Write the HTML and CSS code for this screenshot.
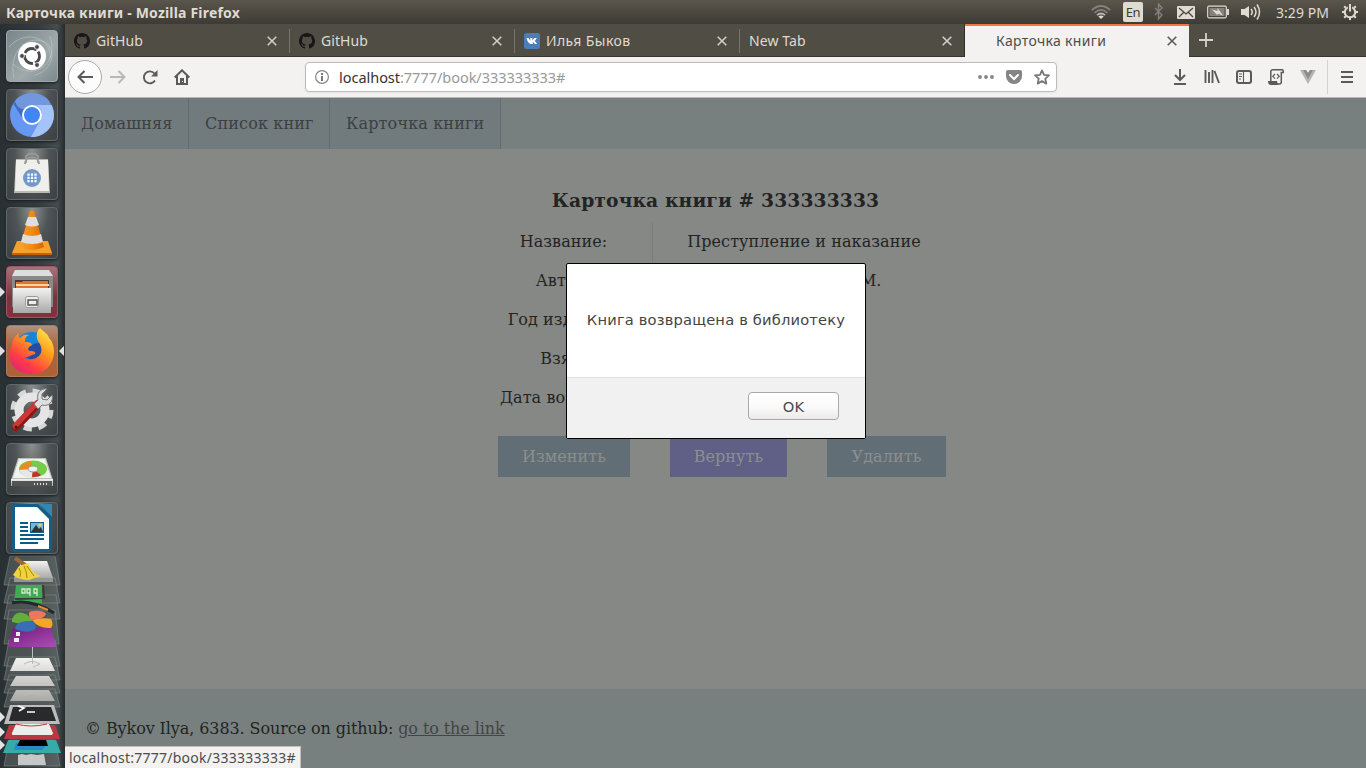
FILE: index.html
```html
<!DOCTYPE html>
<html lang="ru">
<head>
<meta charset="utf-8">
<title>Карточка книги</title>
<link rel="stylesheet" href="styles.css">
</head>
<body>
<svg class="defs" aria-hidden="true">
  <defs>
    <linearGradient id="steel" x2="0" y2="1"><stop offset="0" stop-color="#f2f2f0"/><stop offset="1" stop-color="#a9aaa8"/></linearGradient>
    <linearGradient id="cone" x2="1" y2="0"><stop offset="0" stop-color="#f7a030"/><stop offset=".5" stop-color="#f58a10"/><stop offset="1" stop-color="#d86404"/></linearGradient>
    <linearGradient id="fox" x1=".9" y1="0" x2=".2" y2="1"><stop offset="0" stop-color="#fff14f"/><stop offset=".4" stop-color="#ff9a1e"/><stop offset=".75" stop-color="#ff3b46"/><stop offset="1" stop-color="#e0217f"/></linearGradient>
    <linearGradient id="purple" x2="1" y2="1"><stop offset="0" stop-color="#6c1d78"/><stop offset="1" stop-color="#b04cb8"/></linearGradient>
    <symbol id="github" viewBox="0 0 16 16"><path fill="#191717" d="M8 0C3.58 0 0 3.58 0 8c0 3.54 2.29 6.53 5.47 7.59.4.07.55-.17.55-.38v-1.49c-2.01.37-2.53-.49-2.69-.94-.09-.23-.48-.94-.82-1.13-.28-.15-.68-.52-.01-.53.63-.01 1.08.58 1.23.82.72 1.21 1.87.87 2.33.66.07-.52.28-.87.51-1.07-1.78-.2-3.64-.89-3.64-3.95 0-.87.31-1.59.82-2.15-.08-.2-.36-1.02.08-2.12 0 0 .67-.21 2.2.82a7.6 7.6 0 0 1 4 0c1.53-1.04 2.2-.82 2.2-.82.44 1.1.16 1.92.08 2.12.51.56.82 1.27.82 2.15 0 3.07-1.87 3.75-3.65 3.95.29.25.54.73.54 1.48v2.2c0 .21.15.46.55.38A8 8 0 0 0 16 8c0-4.42-3.58-8-8-8z"/></symbol>
    <symbol id="close" viewBox="0 0 10 10"><path d="M.7.7l8.6 8.6M9.3.7L.7 9.3" fill="none" stroke="currentColor" stroke-width="1.6"/></symbol>
  </defs>
</svg>
<header class="panel">
  <span class="panel-title">Карточка книги - Mozilla Firefox</span>
  <div class="indicators">
    <svg width="20" height="16" viewBox="0 0 20 16"><g fill="none" stroke-width="1.7"><path stroke="#85827b" d="M.8 6.2Q10-2.2 19.2 6.2M3.5 9Q10 2.8 16.500 9"/><path stroke="#bdb9b1" d="M6 11.200q4-3.400 8 0"/></g><path fill="#dfdbd2" d="M7.300 12.400q2.700-2 5.400 0L10 15z"/></svg>
    <span class="lang">En</span>
    <svg class="bt" width="10" height="18" viewBox="0 0 10 18"><path d="M1 5l7 7-3.500 4V1L8 5l-7 7" fill="none" stroke="#85827b" stroke-width="1.400"/></svg>
    <svg class="mail" width="18" height="13" viewBox="0 0 18 13"><rect width="18" height="13" rx="1" fill="#dfdbd2"/><path d="M2 2l7 6 7-6M2 11l4.500-4.500M16 11l-4.500-4.500" fill="none" stroke="#49473f" stroke-width="1.300"/></svg>
    <svg class="batt" width="22" height="14" viewBox="0 0 22 14"><rect x=".7" y="1.200" width="18.600" height="11.600" rx="1.200" fill="none" stroke="#dfdbd2" stroke-width="1.200"/><path fill="#85827b" d="M2.500 3h15v8h-15z"/><path fill="#dfdbd2" d="M20 4h2v6h-2zM5 4.500l5.500 1.500V3l5.500 7.500-5.500-2v2z"/></svg>
    <svg class="vol" width="20" height="18" viewBox="0 0 20 18"><path fill="#dfdbd2" d="M0 6h3.500L8 3v12l-4.500-3H0z"/><path d="M10 6q2.500 3 0 6M13 4q4 5 0 10M16 1.500q5 7.500 0 15" fill="none" stroke="#dfdbd2" stroke-width="1.500"/></svg>
    <span class="clock">3:29 PM</span>
    <svg class="power" width="16" height="16" viewBox="0 0 16 16"><g fill="none" stroke="#dfdbd2" stroke-width="2"><path d="M5.800 3.400a5.200 5.200 0 1 0 4.400 0M8 0v7.500"/><path d="M3.800 3.800L2.200 2.200M12.200 3.800l1.600-1.600M2.500 8H0M13.500 8H16M4 12l-1.800 1.800M12 12l1.800 1.800M8 13.500V16"/></g></svg>
  </div>
</header>
<div class="desktop">
  <aside class="launcher">
    <div class="tile dash"><svg viewBox="0 0 52 52"><g fill="none" stroke="#c3caca" stroke-opacity=".55"><path d="M8 48C2 23 20 4 39 12c14 10 5 30-10 33M44 6c10 30-18 45-37 28M3 17C21-3 47 10 44 29"/></g><circle cx="26" cy="26" r="14" fill="#fff"/><circle cx="26" cy="26" r="7.500" fill="none" stroke="#47494a" stroke-width="2.800" stroke-dasharray="13.700 2" stroke-dashoffset="5"/><g fill="#47494a" stroke="#fff" stroke-width=".8"><circle cx="16" cy="26" r="2.400"/><circle cx="31" cy="17" r="2.400"/><circle cx="31" cy="35" r="2.400"/></g></svg></div>
    <div class="tile"><svg viewBox="0 0 52 52"><circle cx="26" cy="26" r="22" fill="#6698f3"/><path fill="#416bc7" d="M7.500 15A22 22 0 0 1 45.500 16H26A10 10 0 0 0 17 30z"/><path fill="#7198de" d="M9 12a22 22 0 0 1 34 0l2 4H26q-5 0-8 4-6 1-9-8z"/><path fill="#a3c3fa" d="M45.500 16A22 22 0 0 1 25 48l10-18a10 10 0 0 0-6-14z"/><circle cx="26" cy="26" r="9" fill="#4285f4" stroke="#fff" stroke-width="2"/></svg></div>
    <div class="tile"><svg viewBox="0 0 52 52"><path fill="#bbb9b2" d="M10 11h32l2 34H8z"/><path fill="#efefeb" d="M10 12h32l1 31H9z"/><path d="M20 15V8q6-5 12 0v7M19 16c0-9 14-9 14 0" fill="none" stroke="#999a96" stroke-width="1.800"/><circle cx="26" cy="30" r="9" fill="#7399c9"/><path d="M22.500 25.500v9m3.500-9v9m3.500-9v9" stroke="#fff" stroke-width="2.200" stroke-dasharray="2.200 1.100"/></svg></div>
    <div class="tile"><svg viewBox="0 0 52 52"><path fill="#f5a12c" d="M11 34h31l4 12H6z"/><path fill="#c65f09" d="M6 46h40v2H6z"/><path fill="url(#cone)" d="M24 4q2-1 4 0l10 36q-12 6-24 0z"/><path fill="#dedede" d="M22 10h8l3 8q-7 3-14 0zM17 27q9 4 18 0l2 8q-11 4-22 0z"/></svg></div>
    <div class="tile files"><svg viewBox="0 0 52 52"><path fill="#898989" d="M6 10l3-6h34l4 6v31H6z"/><path fill="#ddd" d="M6 10l3-6h34l4 6z"/><path fill="#4b3934" d="M9 14h34v10H9z"/><path fill="#dd7430" d="M10 16h6l1-1h25v8H10z"/><path d="M10 19h33" stroke="#ffd29b" stroke-width="2"/><path fill="url(#steel)" d="M7 22h38v25H7z"/><rect x="19.500" y="30.500" width="13" height="11" rx="2" fill="#eee" stroke="#999"/><path fill="none" stroke="#555" stroke-width="1.500" d="M22 34h9v5h-9z"/></svg><i class="pip"></i></div>
    <div class="tile firefox"><svg viewBox="0 0 52 52"><circle cx="26" cy="25" r="18" fill="#1784d8"/><path fill="#284a9f" d="M23 22q14-10 14 5L27 36l-9-5z"/><path fill="url(#fox)" d="M34 3c-4 4-4 9-2 13 6 8 4 16-5 18-5 1-7 0-9-2 5 1 6-2 11-3 1-2-1-3-4-3-4 0-4-4 1-6 0-3-5-3-7-3 0-4 1-6 4-7-4-1-6 0-9 3-2-1-2-3-1-5-5 4-7 8-7 12-7 14 1 28 18 29 14 1 24-9 24-23 0-5-2-10-5-13-1-5-6-6-9-10z"/></svg><i class="pip"></i><i class="pip active"></i></div>
    <div class="tile"><svg viewBox="0 0 52 52"><circle cx="26" cy="26" r="18.500" fill="none" stroke="#d8d8d8" stroke-width="6" stroke-dasharray="8 6.530"/><circle cx="26" cy="26" r="13" fill="none" stroke="#e5e5e5" stroke-width="9"/><path d="M10 43L32 20" stroke="#8f1717" stroke-width="8" stroke-linecap="round"/><path d="M9 42L31 19" stroke="#cc3935" stroke-width="5" stroke-linecap="round"/><path fill="#dedede" stroke="#777" d="M28 20l4-4c-2-7 3-12 9-11l-5 5v5l5 1 5-5c2 7-4 12-10 10l-4 4z"/><circle cx="10" cy="43" r="1.500" fill="#551111"/></svg></div>
    <div class="tile"><svg viewBox="0 0 52 52"><path fill="#bdbdb9" d="M12 15h28l7 22H5z"/><path fill="#f1f1ee" d="M13 16h26l6 19H7z"/><ellipse cx="27" cy="26" rx="14" ry="8.500" fill="#73ce45"/><path fill="#e88b24" d="M27 26L13 27q2-8 12-9z"/><path fill="#e7e7e7" d="M27 26l-14 1q3 8 13 7z"/><path fill="#ca2d2d" d="M27 26l-1 8q6 0 9-2z"/><ellipse cx="27" cy="26" rx="5" ry="3" fill="#eee" stroke="#999"/><path fill="url(#steel)" d="M5 36h42v7H5z"/><path fill="#525554" d="M6 38h40v5H6z"/><path d="M28 41h15" stroke="#ddd" stroke-width="2" stroke-dasharray="1 2"/></svg></div>
    <div class="tile"><svg viewBox="0 0 52 52"><path fill="#125e88" d="M9 2h23l14 13v32q0 3-3 3H9q-3 0-3-3V5q0-3 3-3z"/><path fill="#fff" d="M9 5h22l12 12v30H9z"/><path fill="#3186b6" d="M34 2h12v13z"/><path d="M14 21h8m-8 4h8m-8 4h8m-8 4h24m-24 4h24m-24 4h18" stroke="#075c8e" stroke-width="2"/><path fill="#135c88" d="M24 20h14v11H24z"/><path fill="#72b8de" d="M25 21h12v9H25z"/><path fill="#333" d="M25 30l5-7 3 4 2-2 2 5z"/><circle cx="34" cy="23" r="1.500" fill="#f4cb4c"/></svg></div>
    <svg class="folded" viewBox="0 0 65 218" width="65" height="218">
      <g fill="#727978" fill-opacity=".42" stroke="#8a9391" stroke-opacity=".5"><path d="M10 6h45l5 29H4zM10 28h45l5 25H4zM9 45h47l4 24H4zM9 60h46l4 34H4zM9 90h46l5 26H4zM9 107h46l5 23H4zM9 125h46l5 18H4zM9 139h46l5 18H4zM9 190h46l5 26H4z"/></g>
      <path fill="url(#steel)" d="M22 11h25l6 17H14z"/><path fill="#929795" d="M14 28h39v4H14z"/><path d="M15 8l10 7" stroke="#9c673a" stroke-width="4"/><path fill="#efd33a" d="M19 16l9-3q4 11 13 13l-12 4q-10 0-16-5z"/><path d="M19 18q3 5 1 9m4-11q3 6 3 12m0-12q4 6 7 10" fill="none" stroke="#a08a12"/>
      <path fill="#3fa958" d="M16 35h26v18H14z"/><path fill="#343b38" d="M42 35h2l1 14-30 1v-2h28z"/><path d="M22 43v-4h3v4zm8 3v-7h-3v4h3m7 3v-7h-3v4h3" fill="none" stroke="#d8ead8" stroke-width="1.300"/><path d="M12 53q20-4 42 10" fill="none" stroke="#232829" stroke-width="3"/><path d="M38 56l10 4" stroke="#e28d2b" stroke-width="2"/>
      <path fill="url(#purple)" d="M13 78h38l5 19H8z"/><path d="M16 84h4m-6 6h5" stroke="#f1edf3" stroke-width="4"/><path fill="#65ac3e" d="M12 69q4-8 11-6 7 2 9 8-7 5-20 1z"/><path fill="#ed765c" d="M31 70q-5-9 2-9 10-1 13 3-1 5-15 6z"/><path fill="#f7a526" d="M32 70q10-3 19-1 3 5 0 9-12 1-19-8z"/><path fill="#386eb8" d="M32 71q-16-1-17 8 9 4 17 2 8-4 0-10z"/>
      <path fill="url(#steel)" d="M16 108h33l6 13H10zM16 126h33l6 10H10zM16 140h33l6 11H10z"/><path d="M10 122h45M10 137h45M10 152h45" stroke="#555c5b" stroke-width="2"/><path d="M32.500 97v17M24 114q8-5 16 0l-7 3M24 145q10-4 17 0" fill="none" stroke="#b9bdbb"/>
      <path fill="#bcbcbc" d="M10 155h44l6 19H4z"/><path fill="#292a2b" d="M13 157h38l5 14H9z"/><path d="M18 156l6 2-5 3m8 1h8" fill="none" stroke="#fff" stroke-width="1.700"/>
      <path fill="#b93941" d="M9 175h46l5 14H4z"/><path fill="#ededed" d="M16 174h33l4 9q0 2-3 2H14q-3 0-2-2z"/><path d="M16 174q15 4 31 0" fill="none" stroke="#b93941"/>
      <path fill="#38aaa9" d="M8 190h48l5 13H3z"/><path fill="#238bc5" d="M16 193h32l-6 7H14z"/><path fill="#000" d="M20 190h26l2 6H17z"/><path fill="#c4c8c6" d="M18 205l4-1 4 1 5-1 6 1 7-1 2 11H18z"/><path fill="#e4e4e4" d="M0 162l5 5-5 5zM0 177l5 5-5 5zM0 190l5 5-5 5z"/>
    </svg>
  </aside>
  <main class="browser">
    <div class="tabs">
      <div class="tab"><svg class="fav"><use href="#github"/></svg><span>GitHub</span><svg class="x"><use href="#close"/></svg></div>
      <div class="tab"><svg class="fav"><use href="#github"/></svg><span>GitHub</span><svg class="x"><use href="#close"/></svg></div>
      <div class="tab vk"><svg class="fav" viewBox="0 0 16 16"><rect width="16" height="16" rx="2.500" fill="#4d7db8"/><path fill="#fff" d="M2.500 5h2l1.800 3V5h2v2.500L10.500 5h2.300l-2 2.900 2.400 3.100h-2.400l-2-2.200V11H7.500C5 11 3.500 8.500 2.500 5z"/></svg><span>Илья Быков</span><svg class="x"><use href="#close"/></svg></div>
      <div class="tab newtab"><span>New Tab</span><svg class="x"><use href="#close"/></svg></div>
      <div class="tab current"><span>Карточка книги</span><svg class="x"><use href="#close"/></svg></div>
      <svg class="plus" viewBox="0 0 14 14"><path d="M7 0v14M0 7h14" stroke="#d5d2ca" stroke-width="1.800"/></svg>
    </div>
    <div class="toolbar">
      <span class="back"><svg width="16" height="14" viewBox="0 0 16 14"><path d="M16 7H1.500M7.500 1l-6 6 6 6" fill="none" stroke="#5c5a58" stroke-width="2"/></svg></span>
      <svg class="fwd" width="16" height="14" viewBox="0 0 16 14"><path d="M0 7h14.500M8.500 1l6 6-6 6" fill="none" stroke="#b9b8b7" stroke-width="2"/></svg>
      <svg class="reload" width="16" height="16" viewBox="0 0 16 16"><path d="M12.500 4.500A6 6 0 1 0 13 11.500" fill="none" stroke="#5c5a58" stroke-width="1.900"/><path fill="#5c5a58" d="M15.500 1v6.500H9z"/></svg>
      <svg class="home" width="16" height="16" viewBox="0 0 16 16"><path d="M.7 8.500L8 1.300l7.300 7.200M3 7v8h10V7" fill="none" stroke="#5c5a58" stroke-width="2"/><path fill="#5c5a58" d="M6 9h4v6H6z"/><path fill="#f3f2f1" d="M8 12h1v1H8z"/></svg>
      <div class="url">
        <svg width="14" height="14" viewBox="0 0 14 14"><circle cx="7" cy="7" r="6.400" fill="none" stroke="#858585" stroke-width="1.200"/><path fill="#777" d="M6 3h2v2H6zm0 3h2v5H6z"/></svg>
        <span class="address"><b>localhost</b>:7777/book/333333333#</span>
        <svg width="16" height="16" viewBox="0 0 16 16"><g fill="#858585"><circle cx="2" cy="8" r="1.900"/><circle cx="8" cy="8" r="1.900"/><circle cx="14" cy="8" r="1.900"/></g></svg>
        <svg class="pocket" width="16" height="16" viewBox="0 0 16 16"><path fill="#858585" d="M2 1h12q2 0 2 2v4a8 8 0 0 1-16 0V3q0-2 2-2z"/><path d="M4 6l4 4 4-4" fill="none" stroke="#fff" stroke-width="2" stroke-linecap="round"/></svg>
        <svg class="star" width="16" height="16" viewBox="0 0 16 16"><path d="M8 1.400l2 4.500 5 .5-3.700 3.300 1 4.900L8 12.100l-4.300 2.500 1-4.900L1 6.400l5-.5z" fill="none" stroke="#777" stroke-width="1.800" stroke-linejoin="round"/></svg>
      </div>
      <div class="tools">
        <svg viewBox="0 0 16 16"><path d="M8 0v10M3 6l5 5 5-5M2 15h12" fill="none" stroke="#5c5a58" stroke-width="2"/></svg>
        <svg viewBox="0 0 16 16"><path d="M1.500 1v13M5 3v11M8.500 1v13M10.500 2l4.500 12" fill="none" stroke="#5c5a58" stroke-width="1.900"/></svg>
        <svg viewBox="0 0 16 16"><rect x="1" y="2" width="14" height="12" rx="2" fill="none" stroke="#5c5a58" stroke-width="2"/><path d="M7.500 2v12M3 5h3M3 7.500h3M3 10h2" stroke="#5c5a58" stroke-width="1.100"/></svg>
        <svg viewBox="0 0 16 16"><path d="M2.800 12V2.500Q2.800.8 5 .8h9.500q.8 0 .8 2.700h-2V13q0 2-2 2H3" fill="none" stroke="#5c5a58" stroke-width="1.500"/><path fill="#5c5a58" d="M0 12h9l1 4H3q-3 0-3-4z"/><path d="M7 5L4.800 7.300 7 9.600M9 5l2.200 2.300L9 9.600" fill="none" stroke="#5c5a58" stroke-width="1.200"/></svg>
        <svg viewBox="0 0 16 16"><path fill="#b5b5b4" d="M0 1h6l2 3 2-3h6L8 15z"/><path fill="#8c8c8b" d="M3 1h3l2 3 2-3h3L8 10z"/></svg>
        <i class="rule"></i>
        <svg class="menu" viewBox="0 0 12 12"><path d="M0 1h12M0 6h12M0 11h12" stroke="#5c5a58" stroke-width="2"/></svg>
      </div>
    </div>
    <div class="page">
      <nav class="nav"><a>Домашняя</a><a>Список книг</a><a>Карточка книги</a></nav>
      <section class="card">
        <h3>Карточка книги # 333333333</h3>
        <div class="facts">
          <span>Название:</span><span>Преступление и наказание</span>
          <span>Автор:</span><span>Достоевский Ф.М.</span>
          <span>Год издания:</span><span></span>
          <span>Взял:</span><span></span>
          <span>Дата возврата:</span><span></span>
        </div>
        <div class="actions"><button>Изменить</button><button class="return">Вернуть</button><button>Удалить</button></div>
      </section>
      <footer class="footer">© Bykov Ilya, 6383. Source on github: <a>go to the link</a></footer>
      <div class="dialog"><p>Книга возвращена в библиотеку</p><div class="dialog-actions"><button>OK</button></div></div>
      <div class="status">localhost:7777/book/333333333#</div>
    </div>
  </main>
</div>
</body>
</html>
```

FILE: styles.css
```css
* { box-sizing: border-box; }
body { margin: 0; width: 1366px; height: 768px; overflow: hidden; font: 14.5px "Noto Sans", sans-serif; }
svg { display: block; flex: none; }
.defs { position: absolute; width: 0; height: 0; }
.panel { height: 24px; display: flex; justify-content: space-between; align-items: center; padding: 0 8px 0 6px; background: linear-gradient(#5a564c, #3d3b35); color: #dfdbd2; }
.panel-title { font-weight: 700; font-size: 14px; letter-spacing: .19px; }
.indicators { display: flex; align-items: center; }
.lang { width: 20px; height: 20px; margin: 0 11px 0 12px; border-radius: 2px; background: #dfdbd2; color: #3c3b37; font-size: 13px; line-height: 21px; text-align: center; letter-spacing: -.4px; }
.mail { margin-left: 13px; }
.batt { margin-left: 12px; }
.vol { margin-left: 12px; }
.clock { width: 53px; margin: 0 13px 0 15px; font-size: 14px; letter-spacing: .05px; white-space: nowrap; }
.desktop { display: flex; height: 744px; }
.launcher { width: 65px; flex: none; background: linear-gradient(90deg, #293033, #363d40 60%, #454d50 88%, #262b2d); padding: 6px 7px 0 6px; display: flex; flex-direction: column; gap: 7px; }
.tile { position: relative; width: 52px; height: 52px; flex: none; border-radius: 4px; border: 1px solid #626869; background: radial-gradient(ellipse at 50% 0, #8c9090, #4e5455 48%, #3b4143); box-shadow: 0 1px 3px #171b1d; }
.tile > svg { width: 52px; height: 52px; margin: -1px; }
.dash { background: linear-gradient(135deg, #788589, #a0a9aa 60%, #7c8a8e); border-color: #a0a9aa; }
.files { background: linear-gradient(#a2747a, #7c333f 60%, #852f3e); border-color: #9b5863; }
.firefox { background: linear-gradient(#b2907a, #a76540 40%, #ad6237); border-color: #b27956; }
.pip { position: absolute; left: -7px; top: 20px; border: 5px solid transparent; border-left-color: #dfe1e1; border-right: 0; }
.pip.active { left: 52px; border-left: 0; border-right: 5px solid #dfe1e1; }
.folded { margin: -11px 0 0 -6px; }
.browser { width: 1301px; display: flex; flex-direction: column; }
.tabs { height: 33px; display: flex; background: #504d45; border-bottom: 1px solid #36342f; color: #dfdbd2; }
.tab { position: relative; width: 225px; height: 32px; padding: 1px 13px 0 9px; display: flex; align-items: center; font-size: 14px; letter-spacing: .08px; }
.tab:nth-child(-n+3)::after { content: ""; position: absolute; right: 0; top: 5px; width: 1px; height: 24px; background: #77746c; }
.vk { letter-spacing: .4px; }
.fav { width: 16px; height: 16px; margin-right: 6px; }
.x { width: 10px; height: 10px; margin-left: auto; color: #d1cec7; }
.newtab { width: 225px; border-right: 1px solid #302f2a; padding-right: 12px; }
.current { height: 33px; width: 224px; background: #f3f2f1; color: #4c4c4c; border-top: 2px solid #f07746; padding: 0 12px 2px 31px; letter-spacing: .33px; }
.current .x { color: #5c5a58; }
.plus { width: 14px; height: 14px; margin: 9px 0 0 10px; }
.toolbar { height: 41px; flex: none; background: #f3f2f1; border-bottom: 1px solid #b9b7b4; display: flex; align-items: center; padding-left: 3px; }
.back { width: 34px; height: 34px; border: 1px solid #aaa; border-radius: 50%; background: #fcfcfc; display: grid; place-items: center; }
.fwd { margin-left: 8px; }
.reload { margin-left: 16px; }
.home { margin-left: 16px; }
.url { width: 752px; height: 30px; margin-left: 115px; border: 1px solid #bebcb9; border-radius: 4px; background: #fff; display: flex; align-items: center; padding: 0 6px 0 9px; box-shadow: 0 1px 3px #0000000d; }
.address { width: 639px; flex: none; margin-left: 10px; color: #999; font-size: 14.5px; letter-spacing: -.03px; }
.address b { color: #333; font-weight: 400; }
.pocket { margin-left: 12px; }
.star { margin-left: 12px; }
.tools { display: flex; align-items: center; gap: 16px; margin-left: 115px; }
.tools svg { width: 16px; height: 16px; }
.tools .menu { width: 12px; height: 12px; margin-left: -3px; }
.rule { width: 1px; height: 34px; background: #d4d2d0; margin-left: -5px; }
.page { position: relative; height: 670px; background: #868886; color: #222423; font: 16px "DejaVu Serif", serif; letter-spacing: .08px; display: flex; flex-direction: column; }
.nav { height: 51px; display: flex; background: #77807e; color: #3c4040; letter-spacing: .15px; }
.nav a { width: 124px; padding-left: 16px; border-right: 1px solid #626c71; background: #717a7c; line-height: 51px; white-space: nowrap; }
.nav a:nth-child(2) { width: 141px; }
.nav a:nth-child(3) { width: 171px; }
.card { height: 540px; display: flex; flex-direction: column; align-items: center; padding-top: 38px; }
h3 { margin: 0; font-size: 18.72px; line-height: 26px; letter-spacing: .12px; }
.facts { width: 480px; margin-top: 9px; display: grid; grid-template-columns: 177px 303px; grid-auto-rows: 39px; text-align: center; line-height: 39px; }
.facts span:nth-child(odd) { border-right: 1px solid #7b7d7b; }
.facts span:nth-child(n+5) { border-right-color: transparent; }
.actions { display: flex; gap: 40px; margin: 19px 0 0 13px; }
.actions button { height: 41px; padding: 0; width: 132px; border: 0; background: #626e75; color: #8c8f90; font: inherit; letter-spacing: .08px; }
.actions .return { width: 117px; background: #605f86; }
.actions button:last-child { width: 119px; }
.footer { height: 79px; background: #77807e; padding-left: 20px; line-height: 79px; letter-spacing: -.02px; white-space: nowrap; }
.footer { letter-spacing: -.09px; }
.footer a { color: #414546; text-decoration: underline; }
.dialog { position: absolute; left: 501px; top: 165px; width: 300px; height: 176px; background: #fff; border: 1px solid #000; border-radius: 2px; color: #444; font: 14.67px "DejaVu Sans", sans-serif; overflow: hidden; letter-spacing: .18px; }
.dialog p { height: 113px; margin: 0; text-align: center; line-height: 111px; white-space: nowrap; }
.dialog-actions { height: 61px; border-top: 1px solid #e2e2e2; background: #f1f1f1; display: flex; justify-content: flex-end; padding: 14px 26px 0 0; }
.dialog button { width: 91px; height: 28px; padding: 0; border: 1px solid #aaa9a7; border-radius: 4px; background: linear-gradient(#fff, #fafafa 55%, #eceae8); color: #4c4c4c; font: inherit; letter-spacing: .2px; }
.status { position: absolute; left: 0; bottom: 0; width: 236px; height: 22px; padding-left: 4px; background: #f3f2f1; border: 1px solid #c2c1bf; border-width: 1px 1px 0 0; color: #4c4c4c; font: 14px/22px "Noto Sans", sans-serif; letter-spacing: .24px; white-space: nowrap; }
```
